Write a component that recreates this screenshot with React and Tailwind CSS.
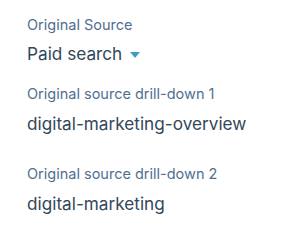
function Label({ children }) {
  return <div className="text-[14.5px] leading-[20px] text-[#516f90]">{children}</div>;
}

function Value({ children }) {
  return <div className="text-[17.2px] leading-[24px] text-[#33475b]">{children}</div>;
}

export default function App() {
  return (
    <div className="min-h-[249px] bg-white pl-[27px] pt-[15px]" style={{ fontFamily: 'Inter, sans-serif' }}>
      <Label>Original Source</Label>
      <div className="mt-[7px] flex items-center gap-[8px]">
        <Value>Paid search</Value>
        <svg width="10" height="6" viewBox="0 0 10 6" className="mt-[1px]">
          <path d="M0 0h10L5 6z" fill="#3c9fc1" />
        </svg>
      </div>
      <div className="mt-[18px]">
        <Label>Original source drill-down 1</Label>
      </div>
      <div className="mt-[8px]">
        <Value>digital-marketing-overview</Value>
      </div>
      <div className="mt-[28px]">
        <Label>Original source drill-down 2</Label>
      </div>
      <div className="mt-[8px]">
        <Value>digital-marketing</Value>
      </div>
    </div>
  );
}
